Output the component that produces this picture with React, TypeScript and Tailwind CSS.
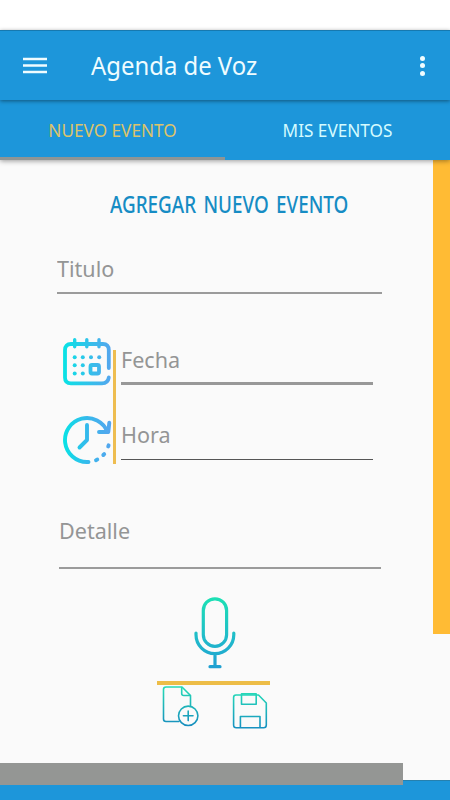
import type { ReactNode } from "react";
import clsx from "clsx";

function MenuIcon() {
  return (
    <svg className="h-[18px] w-6" viewBox="0 0 24 18" fill="currentColor" aria-hidden="true">
      <path d="M0 .8H24V3.3H0ZM0 7.3H24V9.8H0ZM0 13.8H24V16.3H0Z" />
    </svg>
  );
}

function CalendarIcon() {
  return (
    <svg className="h-[52px] w-[50px]" viewBox="0 0 50 52" fill="none" aria-hidden="true">
      <defs>
        <linearGradient id="calendar" gradientUnits="userSpaceOnUse" x1="1" y1="26" x2="49" y2="26">
          <stop stopColor="#08e3e5" />
          <stop offset="1" stopColor="#55a5ee" />
        </linearGradient>
      </defs>
      <g stroke="url(#calendar)" strokeWidth="3.8" strokeLinecap="round" strokeLinejoin="round">
        <path d="M46.8 31V13Q46.8 7 41 7H9Q3 7 3 13V40.5Q3 46.3 9 46.3H40Q46 46.3 46.8 40.5" />
        <path strokeWidth="3.4" d="M12.7 2.8V9.8M24.8 2.8V9.8M37 2.8V9.8" />
        <rect x="28.5" y="28" width="8.5" height="8.5" rx="1.5" />
      </g>
      <g fill="url(#calendar)">
        {[20.2, 28.3, 36.4].map((y) =>
          [12.7, 20.8, 29, 37.2]
            .filter((x) => y < 21 || x < 25)
            .map((x) => <circle key={`${x}-${y}`} cx={x} cy={y} r="2" />),
        )}
      </g>
    </svg>
  );
}

function ClockIcon() {
  return (
    <svg className="h-[50px] w-[50px]" viewBox="0 0 50 50" fill="none" aria-hidden="true">
      <defs>
        <linearGradient id="clock" gradientUnits="userSpaceOnUse" x1="1" y1="25" x2="49" y2="25">
          <stop stopColor="#08e3e5" />
          <stop offset=".5" stopColor="#35b9ec" />
          <stop offset="1" stopColor="#55a5ee" />
        </linearGradient>
      </defs>
      <g stroke="url(#clock)" strokeWidth="3.9" strokeLinecap="round" strokeLinejoin="round">
        <path d="M26.5 47H25A22 22 0 1 1 45.5 17" />
        <path d="M37 17H46.3L47.3 7.8" />
        <path d="M25 10V25L17.5 32.5" />
        <path d="M34 45.2L35.3 44.6M41.3 40L42.2 39.1M46.2 31.5L46.6 30.3" />
      </g>
    </svg>
  );
}

function MicIcon() {
  return (
    <svg className="h-[74px] w-[44px]" viewBox="0 0 44 74" fill="none" aria-hidden="true">
      <defs>
        <linearGradient id="mic" gradientUnits="userSpaceOnUse" x1="22" y1="2" x2="22" y2="72">
          <stop stopColor="#1ce0b4" />
          <stop offset=".6" stopColor="#20b9cb" />
          <stop offset="1" stopColor="#1f9fd2" />
        </linearGradient>
      </defs>
      <g stroke="url(#mic)" strokeWidth="3.2" strokeLinecap="round">
        <rect x="10.3" y="2.8" width="23.3" height="47.5" rx="11.6" />
        <path d="M3 37V38.8A18.9 18.9 0 0 0 40.8 38.8V37M22 58.5V70.5M17 70.7H27" />
      </g>
    </svg>
  );
}

function AddFileIcon() {
  return (
    <svg className="h-[42px] w-[38px]" viewBox="0 0 38 42" fill="none" aria-hidden="true">
      <defs>
        <linearGradient id="file" gradientUnits="userSpaceOnUse" x1="18" y1="1" x2="18" y2="41">
          <stop stopColor="#26dcb5" />
          <stop offset="1" stopColor="#168dbe" />
        </linearGradient>
      </defs>
      <g stroke="url(#file)" strokeWidth="1.6" strokeLinecap="round" strokeLinejoin="round">
        <path d="M17 36.5H4Q1.5 36.5 1.5 34V4.5Q1.5 2 4 2H20L28.5 10.5V21" />
        <path d="M19.7 2.5V8.5Q19.7 10.5 21.7 10.5H28" />
        <circle cx="26.2" cy="30.8" r="9.7" />
        <path d="M26.2 26V35.6M21.4 30.8H31" />
      </g>
    </svg>
  );
}

function SaveIcon() {
  return (
    <svg className="h-[38px] w-[36px]" viewBox="0 0 36 38" fill="none" aria-hidden="true">
      <defs>
        <linearGradient id="save" gradientUnits="userSpaceOnUse" x1="18" y1="1" x2="18" y2="37">
          <stop stopColor="#24d8b8" />
          <stop offset="1" stopColor="#168fc1" />
        </linearGradient>
      </defs>
      <g stroke="url(#save)" strokeWidth="1.6" strokeLinejoin="round">
        <path d="M4 3H26.5L34.3 11V33Q34.3 35.7 31.6 35.7H4.3Q1.6 35.7 1.6 33V5.5Q1.6 3 4 3Z" />
        <path d="M9.5 1.9H24.2V12.2H9.5ZM8.4 35.7V24.5H28V35.7" />
      </g>
    </svg>
  );
}

function Field({ children, className }: { children: ReactNode; className?: string }) {
  return (
    <div className={clsx("text-[22px] leading-[28px] text-[#949595]", className)}>
      <span className="block w-max origin-left scale-x-[0.98]">{children}</span>
    </div>
  );
}

export default function App() {
  return (
    <div className="flex h-[800px] w-[450px] flex-col overflow-hidden bg-[#fafafa] font-['Noto_Sans',sans-serif]">
      <div className="h-[30px] shrink-0 bg-white" />
      <header className="relative z-20 flex h-[70px] shrink-0 items-center border-t border-[#1679b0] bg-[#1d96da] pr-[25px] pl-[23px] text-[#effcff] shadow-[0_1px_4px_rgba(0,0,0,0.45)]">
        <button aria-label="Menú">
          <MenuIcon />
        </button>
        <h1 className="ml-[44px] w-max origin-left scale-x-[0.975] text-[24.5px] leading-8">Agenda de Voz</h1>
        <button className="ml-auto flex flex-col gap-[2.5px]" aria-label="Más opciones">
          <span className="size-[5px] rounded-full bg-current" />
          <span className="size-[5px] rounded-full bg-current" />
          <span className="size-[5px] rounded-full bg-current" />
        </button>
      </header>

      <nav className="relative z-10 grid h-[60px] shrink-0 grid-cols-2 bg-[#1d96da] text-center text-[17.2px] shadow-[0_1px_5px_rgba(0,0,0,0.4)]">
        <button className="border-b-[3px] border-[#8e9595] pt-[5px] text-[#dcc36a]">NUEVO EVENTO</button>
        <button className="pt-[2px] text-[#d4fbff]">MIS EVENTOS</button>
      </nav>

      <div className="flex h-[603px] shrink-0 justify-between">
        <main className="w-[400px] pl-[57px]">
          <h2 className="mt-[29px] ml-[53px] w-max origin-left scale-x-[0.82] text-[23px] leading-[30px] font-medium [word-spacing:3px] text-[#168cc4]">
            AGREGAR NUEVO EVENTO
          </h2>
          <Field className="mt-[35px] h-10 w-[325px] border-b-2 border-[#9b9b9b]">Titulo</Field>

          <div className="mt-[43px] flex h-[133px] pl-[5px]">
            <div className="flex w-[51px] flex-col gap-[26px]">
              <CalendarIcon />
              <ClockIcon />
            </div>
            <div className="mt-[13px] h-[114px] w-[3px] bg-[#eebd50]" />
            <div className="ml-[5px] w-[252px] pt-[8px]">
              <Field className="h-10 border-b-3 border-[#989898]">Fecha</Field>
              <Field className="mt-[35px] h-10 border-b border-[#555]">Hora</Field>
            </div>
          </div>

          <Field className="mt-[46px] ml-[2px] h-[53px] w-[322px] border-b-2 border-[#9b9b9b]">Detalle</Field>

          <div className="mt-[27px] ml-[100px] flex w-[113px] flex-col">
            <button className="ml-[36px] w-[44px]" aria-label="Grabar voz">
              <MicIcon />
            </button>
            <div className="mt-[11px] h-1 bg-[#edbd47]" />
            <div className="flex items-start pl-[5px]">
              <button aria-label="Agregar archivo">
                <AddFileIcon />
              </button>
              <button className="mt-[7px] ml-[32px]" aria-label="Guardar">
                <SaveIcon />
              </button>
            </div>
          </div>
        </main>
        <aside className="h-[474px] w-[17.5px] bg-[#ffbb34]" />
      </div>

      <footer className="flex h-[37px] shrink-0 flex-col">
        <div className="relative z-10 h-[22px] w-[402.5px] shrink-0 bg-[#949694]" />
        <div className="-mt-[5px] grow border-t border-[#2680ae] bg-[#1d96da]" />
      </footer>
    </div>
  );
}
